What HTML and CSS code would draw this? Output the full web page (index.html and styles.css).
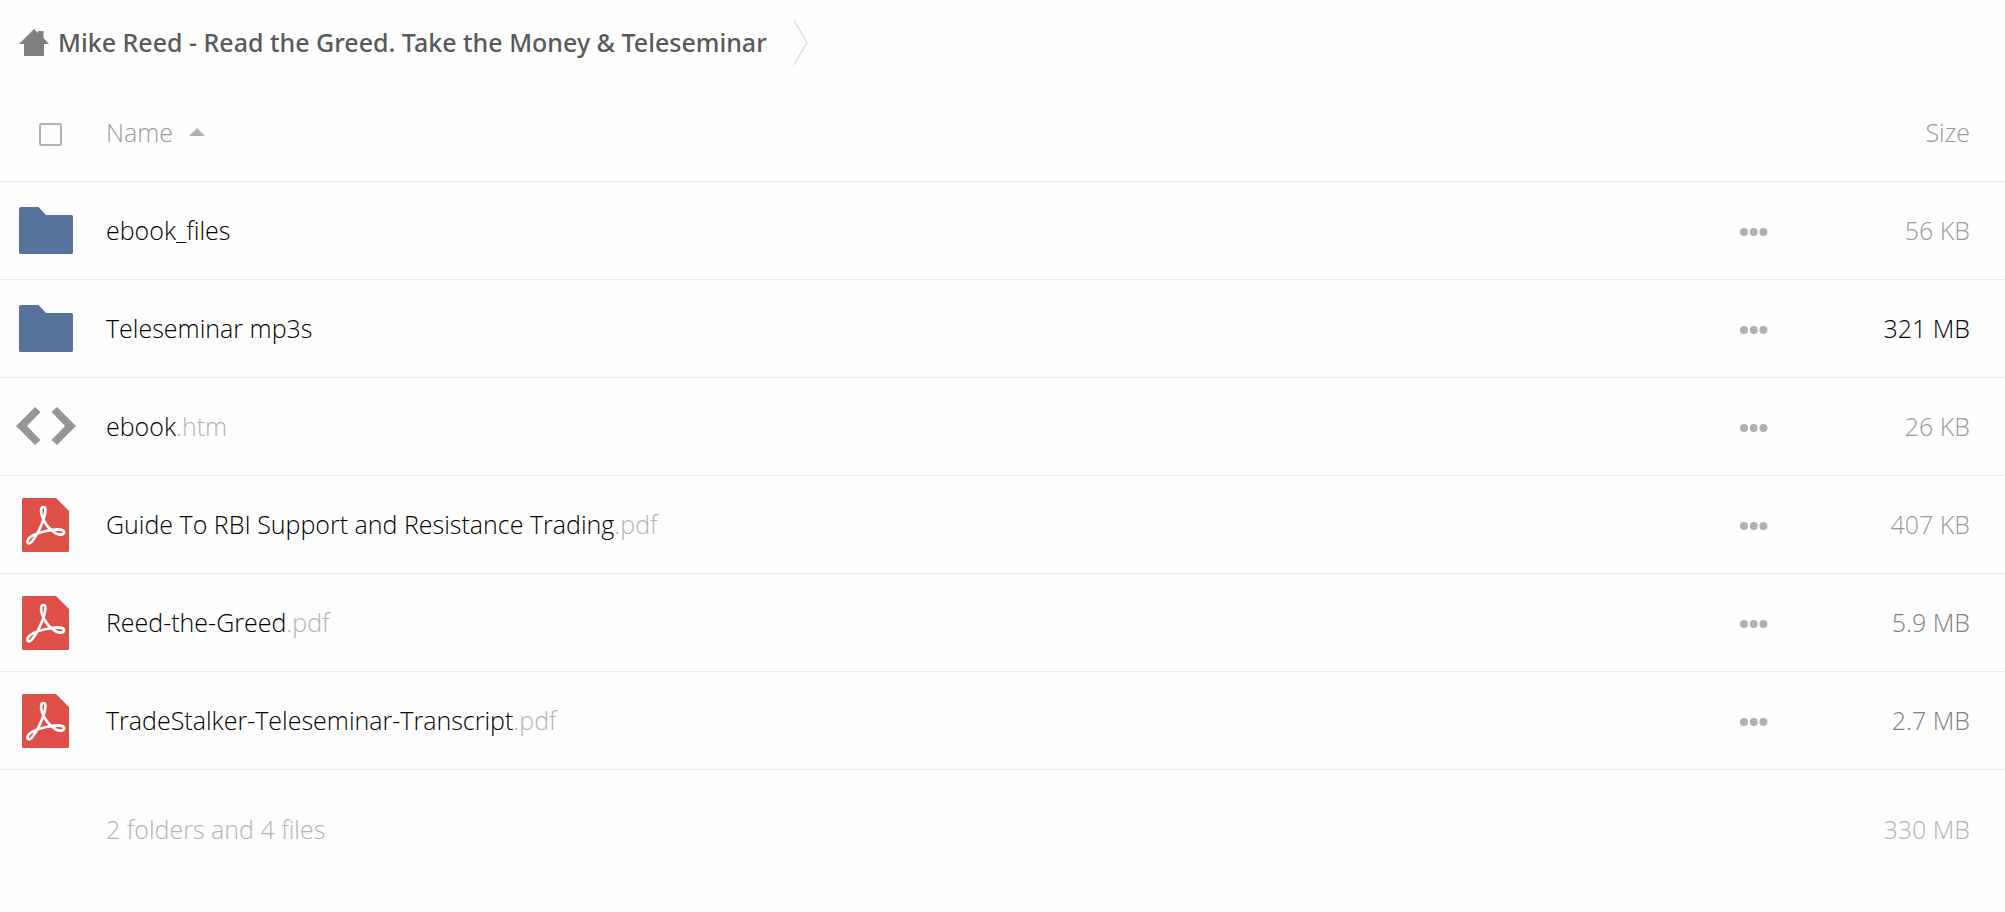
FILE: index.html
```html
<!DOCTYPE html>
<html lang="en">
<head>
<meta charset="utf-8">
<title>Mike Reed - Read the Greed. Take the Money &amp; Teleseminar</title>
<link rel="stylesheet" href="styles.css">
</head>
<body>
<svg class="defs" aria-hidden="true">
  <symbol id="folder" viewBox="0 0 54 47"><path d="M2 0H19.500L27 8H52.500Q54 8 54 9.500V45.500Q54 47 52.500 47H1.500Q0 47 0 45.500V2Q0 0 2 0Z" fill="#55739b"/></symbol>
  <symbol id="code" viewBox="0 0 60 38"><path d="M19 0L0 19L19 38L24.500 33L11 19L24.500 5ZM41 0L60 19L41 38L35.500 33L49 19L35.500 5Z" fill="#969696"/></symbol>
  <symbol id="pdf" viewBox="0 0 47 54"><path d="M1.500 0H34L47 13V52.500Q47 54 45.500 54H1.500Q0 54 0 52.500V1.500Q0 0 1.500 0Z" fill="#de5047"/><path d="M21.500 9C18.500 9 18.700 14 20 18C22 24 27 31.500 34 35.500C39 38 43 36 42 33.500C40.500 30.500 31 31.500 24 33C17 34.500 8 37.500 5.800 42C4.300 45.500 7.500 46.500 10 43.500C15 37.500 20.500 26 22.500 18C23.700 13 24 9 21.500 9Z" fill="none" stroke="#fff" stroke-width="2.700"/></symbol>
  <symbol id="dots" viewBox="0 0 28 8"><g fill="#b0b0b0"><circle cx="4" cy="4" r="4"/><circle cx="13.700" cy="4" r="4"/><circle cx="23.400" cy="4" r="4"/></g></symbol>
</svg>
<nav class="crumbs" aria-label="Breadcrumb">
  <a class="home" href="#">
    <svg class="house" viewBox="0 0 30 27" aria-hidden="true"><path d="M15 0L19 4V2H24.500V9L30 15H25V27H5V15H0Z" fill="#808080"/></svg>
    <span>Mike Reed - Read the Greed. Take the Money &amp; Teleseminar</span>
  </a>
  <svg class="sep" viewBox="0 0 15 47" aria-hidden="true"><path d="M1 1L14 23.500L1 46" fill="none" stroke="#d0d0d0"/></svg>
</nav>
<table class="files">
  <thead>
    <tr>
      <th class="pick"><input class="check" type="checkbox" aria-label="Select all"></th>
      <th class="name"><button class="sort" type="button">Name<svg class="arrow" viewBox="0 0 16 8" aria-hidden="true"><path d="M8 0L16 8H0Z" fill="#b0b0b0"/></svg></button></th>
      <th class="menu"></th>
      <th class="size">Size</th>
    </tr>
  </thead>
  <tbody>
    <tr><td class="pick"><svg class="folder"><use href="#folder"/></svg></td><td class="name"><a href="#">ebook_files</a></td><td class="menu"><button type="button" aria-label="More"><svg class="dots"><use href="#dots"/></svg></button></td><td class="size">56 KB</td></tr>
    <tr><td class="pick"><svg class="folder"><use href="#folder"/></svg></td><td class="name"><a href="#">Teleseminar mp3s</a></td><td class="menu"><button type="button" aria-label="More"><svg class="dots"><use href="#dots"/></svg></button></td><td class="size large">321 MB</td></tr>
    <tr><td class="pick"><svg class="code"><use href="#code"/></svg></td><td class="name"><a href="#">ebook<span class="ext">.htm</span></a></td><td class="menu"><button type="button" aria-label="More"><svg class="dots"><use href="#dots"/></svg></button></td><td class="size">26 KB</td></tr>
    <tr><td class="pick"><svg class="pdf"><use href="#pdf"/></svg></td><td class="name"><a href="#">Guide To RBI Support and Resistance Trading<span class="ext">.pdf</span></a></td><td class="menu"><button type="button" aria-label="More"><svg class="dots"><use href="#dots"/></svg></button></td><td class="size">407 KB</td></tr>
    <tr><td class="pick"><svg class="pdf"><use href="#pdf"/></svg></td><td class="name"><a href="#">Reed-the-Greed<span class="ext">.pdf</span></a></td><td class="menu"><button type="button" aria-label="More"><svg class="dots"><use href="#dots"/></svg></button></td><td class="size medium">5.9 MB</td></tr>
    <tr><td class="pick"><svg class="pdf"><use href="#pdf"/></svg></td><td class="name"><a href="#">TradeStalker-Teleseminar-Transcript<span class="ext">.pdf</span></a></td><td class="menu"><button type="button" aria-label="More"><svg class="dots"><use href="#dots"/></svg></button></td><td class="size medium">2.7 MB</td></tr>
  </tbody>
  <tfoot>
    <tr><td class="pick"></td><td class="name">2 folders and 4 files</td><td class="menu"></td><td class="size">330 MB</td></tr>
  </tfoot>
</table>
</body>
</html>
```

FILE: styles.css
```css
* { box-sizing: border-box; }
body { margin: 0; background: #fefefe; color: #000; font: 300 25px/34px "Open Sans", sans-serif; }
a { color: inherit; text-decoration: none; }
button { padding: 0; border: 0; background: none; color: inherit; font: inherit; cursor: pointer; }
svg { display: block; }
.defs { position: absolute; width: 0; height: 0; }
.crumbs { display: flex; align-items: center; gap: 26px; height: 84px; padding-left: 19px; }
.home { display: flex; align-items: center; gap: 9px; color: #595959; font-family: "Noto Sans", sans-serif; font-weight: 500; }
.house { width: 30px; height: 27px; }
.sep { width: 15px; height: 47px; }
.files { width: 100%; border-collapse: collapse; table-layout: fixed; }
.files th, .files td { height: 98px; padding: 0; border-bottom: 1px solid #ebebeb; font-weight: 300; text-align: left; vertical-align: middle; }
.files thead { color: #999; }
.files thead th { height: 97px; }
.files .pick { width: 106px; }
.files .menu { width: 100px; padding-top: 4px; }
.files .size { width: 165px; padding-right: 35px; color: #999; text-align: right; }
.files .large { color: #000; }
.files .medium { color: #808080; }
.pick svg { margin-left: 19px; }
.pick .folder { width: 54px; height: 47px; }
.pick .code { width: 60px; height: 38px; margin-left: 16px; }
.pick .pdf { width: 47px; height: 54px; margin: 2px 0 0 22px; }
.files thead .pick { padding-top: 4px; }
.check { display: block; appearance: none; width: 23px; height: 23px; margin: 0 0 0 39px; border: 2px solid #b3b3b3; border-radius: 2px; }
.sort { display: flex; align-items: center; gap: 16px; }
.arrow { width: 16px; height: 8px; }
.menu button { display: block; padding: 12px 0; }
.dots { width: 28px; height: 8px; }
.ext { color: #b3b3b3; }
.files tfoot td { height: 119px; border: 0; }
.files tfoot .name, .files tfoot .size { color: #b3b3b3; }
```
